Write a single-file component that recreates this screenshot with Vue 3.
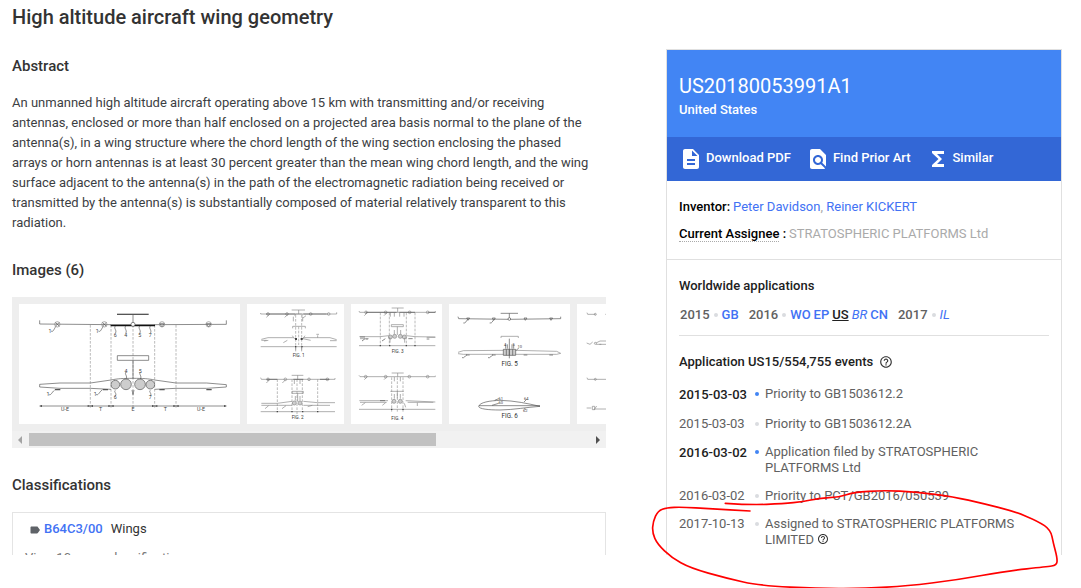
<script setup>
import { computed } from 'vue'

const icons = {
  pdf: 'M14 2H6c-1.1 0-1.99.9-1.99 2L4 20c0 1.1.89 2 1.99 2H18c1.1 0 2-.9 2-2V8l-6-6zm2 16H8v-2h8v2zm0-4H8v-2h8v2zm-3-5V3.5L18.5 9H13z',
  find: 'M20 19.59V8l-6-6H6c-1.1 0-1.99.9-1.99 2L4 20c0 1.1.89 2 1.99 2H18c.45 0 .85-.15 1.19-.4l-4.43-4.43c-.8.52-1.74.83-2.76.83-2.76 0-5-2.24-5-5s2.24-5 5-5 5 2.24 5 5c0 1.02-.31 1.96-.83 2.75L20 19.59zM9 13c0 1.66 1.34 3 3 3s3-1.34 3-3-1.34-3-3-3-3 1.34-3 3z',
  similar: 'M18 4H6v2l6.5 6L6 18v2h12v-3h-7l5-5-5-5h7z',
  label:
    'M17.63 5.84C17.27 5.33 16.67 5 16 5L5 5.01C3.9 5.01 3 5.9 3 7v10c0 1.1.9 1.99 2 1.99L16 19c.67 0 1.27-.33 1.63-.84L22 12l-4.37-6.16z',
  help: 'M11 18h2v-2h-2v2zm1-16C6.48 2 2 6.48 2 12s4.48 10 10 10 10-4.48 10-10S17.52 2 12 2zm0 18c-4.41 0-8-3.59-8-8s3.59-8 8-8 8 3.59 8 8-3.59 8-8 8zm0-14c-2.21 0-4 1.79-4 4h2c0-1.1.9-2 2-2s2 .9 2 2c0 2-3 1.75-3 5h2c0-2.25 3-2.5 3-5 0-2.21-1.79-4-4-4z'
}

const actions = [
  { icon: icons.pdf, label: 'Download PDF' },
  { icon: icons.find, label: 'Find Prior Art' },
  { icon: icons.similar, label: 'Similar' }
]

const years = [
  { year: '2015', countries: [{ code: 'GB' }] },
  {
    year: '2016',
    countries: [
      { code: 'WO' },
      { code: 'EP' },
      { code: 'US', kind: 'current' },
      { code: 'BR', kind: 'pending' },
      { code: 'CN' }
    ]
  },
  { year: '2017', countries: [{ code: 'IL', kind: 'pending' }] }
]

const events = [
  { date: '2015-03-03', text: 'Priority to GB1503612.2', key: true },
  { date: '2015-03-03', text: 'Priority to GB1503612.2A' },
  { date: '2016-03-02', text: 'Application filed by STRATOSPHERIC PLATFORMS Ltd', key: true },
  { date: '2016-03-02', text: 'Priority to PCT/GB2016/050539' },
  { date: '2017-10-13', text: 'Assigned to STRATOSPHERIC PLATFORMS LIMITED', help: true }
]

// Pen stroke, smoothed through the midpoints
const stroke = [
  [256, 400], [330, 405], [430, 401], [490, 395], [535, 385], [598, 381], [640, 367], [730, 361],
  [830, 366], [940, 380], [1030, 401], [1120, 423], [1195, 454], [1232, 480], [1240, 520], [1252, 565],
  [1250, 586], [1220, 590], [1100, 603], [950, 630], [800, 648], [680, 655], [540, 656], [360, 647],
  [260, 625], [150, 594], [95, 563], [52, 522], [37, 488], [39, 455], [54, 422], [80, 413],
  [125, 411], [210, 416], [330, 423]
]

const strokePath = computed(() => {
  let d = `M${stroke[0]}`
  for (let i = 1; i < stroke.length - 1; i++) {
    const [x, y] = stroke[i]
    const [nx, ny] = stroke[i + 1]
    d += ` Q${x} ${y} ${(x + nx) / 2} ${(y + ny) / 2}`
  }
  return `${d} L${stroke[stroke.length - 1]}`
})
</script>

<template>
  <div class="screen">
    <main class="page">
      <h1>High altitude aircraft wing geometry</h1>

      <div class="columns">
        <div class="content">
          <section>
            <h2>Abstract</h2>
            <p class="abstract">
              An unmanned high altitude aircraft operating above 15 km with transmitting and/or receiving antennas,
              enclosed or more than half enclosed on a projected area basis normal to the plane of the antenna(s), in a
              wing structure where the chord length of the wing section enclosing the phased arrays or horn antennas is
              at least 30 percent greater than the mean wing chord length, and the wing surface adjacent to the
              antenna(s) in the path of the electromagnetic radiation being received or transmitted by the antenna(s) is
              substantially composed of material relatively transparent to this radiation.
            </p>
          </section>

          <section>
            <h2>Images (6)</h2>
            <div class="carousel">
              <div class="thumbs">
                <svg class="thumb" width="221" height="120" viewBox="57 42 663 360">
                  <defs>
                    <pattern id="hatch" width="6" height="6" patternUnits="userSpaceOnUse">
                      <path d="M0 0L6 6M6 0L0 6" stroke="#666" stroke-width="1" />
                    </pattern>
                  </defs>
                  <g class="dash">
                    <path d="M271 105V356M333 105V356M399 105V356M464 105V356M528 105V356" />
                  </g>
                  <g class="line">
                    <path d="M119 91V102L333 104M464 104L679 103V91M399 73V100" />
                    <path d="M351 73H446" stroke-width="4" />
                    <path d="M332 106H465" stroke="#111" stroke-width="5" />
                    <path d="M352 197H446V211H352ZM399 211V265M396 300L399 314L402 300" />
                    <path d="M333 270L271 279H180L119 283V291L180 295H271L333 298" />
                    <path d="M464 270L528 279H620L679 284V291L620 295H528L464 298" />
                    <path d="M333 270C352 266 370 265 399 265S446 266 464 270" />
                    <path d="M165 299H181M308 299H324M478 299H494M619 299H635" stroke-width="4" />
                    <path d="M153 123C160 128 162 116 168 109M295 123C302 128 304 116 310 109" />
                    <path d="M146 313C153 318 155 307 164 300M288 313C295 318 297 307 306 300" />
                    <path d="M346 108C340 116 352 120 346 130M377 108C371 116 383 120 377 130M419 108C413 116 425 120 419 130M451 108C445 116 457 120 451 130" />
                    <path d="M378 246C372 252 384 258 378 267M421 246C415 252 427 258 421 267M346 301C340 306 352 310 346 318M451 301C445 306 457 310 451 318" />
                    <path d="M119 348H679" />
                    <path d="M166 97L178 109M178 97L166 109M307 97L319 109M319 97L307 109M479 101L493 101L486 111ZM619 101L633 101L626 111Z" />
                    <circle cx="399" cy="103" r="6" fill="#fff" />
                  </g>
                  <g class="line pale">
                    <circle cx="172" cy="103" r="8" />
                    <circle cx="313" cy="103" r="8" />
                    <circle cx="486" cy="103" r="8" />
                    <circle cx="626" cy="103" r="8" />
                  </g>
                  <path class="solid" d="M118 348l8-3v6zM271 348l-8-3v6zM271 348l8-3v6zM333 348l-8-3v6zM333 348l8-3v6zM464 348l-8-3v6zM464 348l8-3v6zM528 348l-8-3v6zM528 348l8-3v6zM680 348l-8-3v6z" />
                  <g class="round">
                    <circle cx="346" cy="284" r="13" />
                    <circle cx="378" cy="283" r="16" />
                    <circle cx="420" cy="283" r="16" />
                    <circle cx="451" cy="284" r="13" />
                  </g>
                  <g class="mark">
                    <text x="150" y="128">1</text>
                    <text x="292" y="128">1</text>
                    <text x="144" y="317">1</text>
                    <text x="286" y="317">1</text>
                    <text x="346" y="140">6</text>
                    <text x="377" y="140">4</text>
                    <text x="419" y="140">5</text>
                    <text x="451" y="140">7</text>
                    <text x="378" y="248">4</text>
                    <text x="421" y="248">5</text>
                    <text x="346" y="328">6</text>
                    <text x="451" y="328">7</text>
                    <text x="195" y="363">U-E</text>
                    <text x="302" y="363">T</text>
                    <text x="399" y="363">E</text>
                    <text x="496" y="363">T</text>
                    <text x="603" y="363">U-E</text>
                  </g>
                </svg>

                <svg class="thumb" width="97" height="120" viewBox="21 42 291 360">
                  <g class="dash">
                    <path d="M167 75V180M176 110V165M185 75V180M112 268V365M156 268V365M171 268V375M187 268V365M233 268V365" />
                  </g>
                  <g class="line pale">
                    <path d="M62 69V72H290V67M155 60H195M176 60V72M163 76L168 72H184L189 76" />
                    <path d="M158 115V109H196V115M64 148L84 143H160M190 143H270L290 149M64 151H80M270 152H290" />
                    <path d="M157 137L164 147M195 137L188 147M184 145L212 151M233 136V143M229 133H237" />
                    <path d="M79 82L89 73M134 82L144 73M189 84L198 77M72 153L85 151M130 158L142 151M62 170H290" />
                    <path d="M160 80V94M188 80V94M167 170V184M185 170V184" />
                    <circle cx="84" cy="72" r="4" />
                    <circle cx="141" cy="72" r="4" />
                    <circle cx="212" cy="72" r="4" />
                    <circle cx="266" cy="72" r="4" />
                    <path d="M62 263L64 268H285V264M155 256H190M173 256V268M156 304H190V310H156ZM173 310V334" />
                    <path d="M64 340H112L156 334M190 334L233 338H285M64 346H115L156 346M190 346H270M62 365H285" />
                    <path d="M79 279L89 269M127 279L137 269M163 270V282M180 270V282M166 318V332M180 318V332M75 356L86 347M126 356L138 347M203 350L217 346" />
                    <circle cx="84" cy="268" r="4" />
                    <circle cx="136" cy="268" r="4" />
                    <circle cx="207" cy="268" r="4" />
                    <circle cx="262" cy="268" r="4" />
                  </g>
                  <path class="line" d="M78 72H166M190 72H260M160 268H190M80 268H112M240 268H268" />
                  <g class="round pale">
                    <circle cx="163" cy="339" r="6" />
                    <circle cx="180" cy="339" r="6" />
                  </g>
                  <path class="solid" d="M165 144h6v6h-6zM182 144h6v6h-6zM165 168h4v4h-4zM184 168h4v4h-4zM110 363h4v4h-4zM154 363h4v4h-4zM186 363h4v4h-4zM231 363h4v4h-4z" />
                  <g class="fig">
                    <text x="176" y="202">FIG. 1</text>
                    <text x="173" y="387">FIG. 2</text>
                  </g>
                </svg>

                <svg class="thumb" width="91" height="120" viewBox="333 42 273 360">
                  <g class="dash">
                    <path d="M421 68V166M448 68V166M499 68V166M525 68V166M455 262V365M472 262V365M489 262V365" />
                  </g>
                  <g class="line pale">
                    <path d="M357 63L359 67H586V63M455 54H491M473 54V67M454 104H490V110H454ZM472 110V135" />
                    <path d="M358 140H420L446 137M499 137L525 140L586 141M360 146H386M560 142H586M357 167H586" />
                    <path d="M373 77L382 68M432 77L441 68M451 68V80M463 68V80M479 68V80M492 68V80M463 120V133M482 120V133M450 144V158M494 144V158" />
                    <path d="M366 153L375 146M426 153L436 146M505 146H518M377 147H384M560 147H568" stroke-width="3" />
                    <circle cx="378" cy="67" r="4" />
                    <circle cx="437" cy="67" r="4" />
                    <circle cx="509" cy="67" r="4" />
                    <circle cx="563" cy="67" r="4" />
                    <path d="M357 256L360 260H586V257M455 249H491M473 249V260M451 304H491M472 304V325" />
                    <path d="M358 332H444M497 332L586 336M360 337H440M503 337H580M357 358H586" />
                    <path d="M373 269L382 260M432 269L441 260M463 261V274M481 261V274M365 346L376 338M427 346L437 338M532 338V348M493 340L497 352M463 312V326M481 312V326" />
                    <circle cx="377" cy="260" r="4" />
                    <circle cx="437" cy="260" r="4" />
                    <circle cx="508" cy="260" r="4" />
                    <circle cx="563" cy="260" r="4" />
                  </g>
                  <path class="line" d="M378 67H470M478 67H525M360 141H375M565 67H586M420 332H435" />
                  <g class="round pale">
                    <circle cx="451" cy="141" r="6" />
                    <circle cx="464" cy="139" r="6" />
                    <circle cx="481" cy="139" r="6" />
                    <circle cx="493" cy="141" r="6" />
                    <circle cx="462" cy="334" r="6" />
                    <circle cx="481" cy="334" r="6" />
                  </g>
                  <path class="solid" d="M419 165h4v4h-4zM447 165h4v4h-4zM497 165h4v4h-4zM523 165h4v4h-4zM453 356h4v4h-4zM487 356h4v4h-4z" />
                  <g class="fig">
                    <text x="473" y="188">FIG. 3</text>
                    <text x="472" y="389">FIG. 4</text>
                  </g>
                </svg>

                <svg class="thumb" width="121" height="120" viewBox="27 42 363 360">
                  <g class="line">
                    <path d="M54 80L56 86L208 88L362 86V80M182 70H234M208 70V84M208 146V205" />
                    <path d="M183 144V139H235V144" class="pale" />
                    <path d="M54 187L70 182L190 181M227 181L350 184L362 190L350 193L227 193M190 193H70L54 191" class="pale" />
                    <path d="M70 99C78 101 78 92 84 88M149 99C157 101 157 92 163 88M66 203C74 205 74 198 81 194M144 203C152 205 152 198 159 194" />
                    <path d="M78 195H89M156 195H167M251 195H262M328 195H339" />
                    <path d="M197 163V176M202 163V176M216 163V176M221 163V176M228 182L236 174" />
                    <path d="M80 84H89L84 91ZM157 84H166L161 91ZM252 84H261L256 91ZM329 84H338L333 91Z" />
                    <circle cx="208" cy="87" r="4" fill="#fff" />
                    <path d="M116 349C119 337 150 332 180 331C225 332 265 341 300 349C258 352 225 359 180 360C145 360 117 357 116 349ZM117 347H300" />
                    <path d="M164 331L176 326M156 346L176 340M260 328L252 336M254 354L256 360" />
                  </g>
                  <g class="round">
                    <path d="M190 178H227V196H190Z" />
                    <path d="M199 178V196M208 178V196M218 178V196" />
                  </g>
                  <g class="mark small">
                    <text x="195" y="168">4</text>
                    <text x="221" y="168">5</text>
                    <text x="239" y="175">10</text>
                    <text x="182" y="329">61</text>
                    <text x="182" y="343">60</text>
                    <text x="259" y="329">64</text>
                    <text x="256" y="366">62</text>
                  </g>
                  <g class="fig large">
                    <text x="209" y="227">FIG. 5</text>
                    <text x="209" y="384">FIG. 6</text>
                  </g>
                </svg>

                <svg class="thumb" width="97" height="120" viewBox="411 42 291 360">
                  <g class="line pale">
                    <path d="M441 68L443 73H467M496 73H520M440 159L450 163L458 156M468 159L480 153H500M468 163H500M441 263L443 268H500" />
                    <path d="M440 354H454M457 349H464V359H457ZM470 348L462 360M464 357H500M478 163H484" />
                    <circle cx="466" cy="73" r="3" />
                    <circle cx="466" cy="268" r="3" />
                    <circle cx="466" cy="160" r="3" />
                  </g>
                </svg>
              </div>
              <div class="scrollbar">
                <button type="button" class="arrow" aria-label="Scroll left" disabled>
                  <svg width="17" height="17" viewBox="0 0 17 17"><path d="M10 5v8L6 9z" /></svg>
                </button>
                <div class="track"><div class="handle"></div></div>
                <button type="button" class="arrow" aria-label="Scroll right">
                  <svg width="17" height="17" viewBox="0 0 17 17"><path d="M7 5v8l4-4z" /></svg>
                </button>
              </div>
            </div>
          </section>

          <section>
            <h2>Classifications</h2>
            <div class="classes">
              <div class="class-row">
                <svg width="12" height="12" viewBox="0 0 24 24"><path :d="icons.label" /></svg>
                <a href="#">B64C3/00</a>
                <span>Wings</span>
              </div>
              <a class="more" href="#">View 10 more classifications</a>
            </div>
          </section>
        </div>

        <aside class="card">
          <header class="card-head">
            <h2>US20180053991A1</h2>
            <p>United States</p>
          </header>
          <nav class="actions">
            <a v-for="a in actions" :key="a.label" href="#">
              <svg width="24" height="24" viewBox="0 0 24 24"><path :d="a.icon" /></svg>
              <span>{{ a.label }}</span>
            </a>
          </nav>

          <dl class="people">
            <div>
              <dt>Inventor:</dt>
              <dd><a href="#">Peter Davidson</a>, <a href="#">Reiner KICKERT</a></dd>
            </div>
            <div>
              <dt><span class="term">Current Assignee</span> :</dt>
              <dd>STRATOSPHERIC PLATFORMS Ltd</dd>
            </div>
          </dl>

          <div class="history">
            <h3>Worldwide applications</h3>
            <div class="years">
              <div v-for="y in years" :key="y.year" class="year">
                <span>{{ y.year }}</span>
                <i class="dot"></i>
                <div class="countries">
                  <a v-for="c in y.countries" :key="c.code" href="#" :class="c.kind">{{ c.code }}</a>
                </div>
              </div>
            </div>

            <h3 class="events-title">
              Application US15/554,755 events
              <svg width="14" height="14" viewBox="0 0 24 24"><path :d="icons.help" /></svg>
            </h3>
            <ul class="events">
              <li v-for="e in events" :key="e.text" :class="{ key: e.key }">
                <time>{{ e.date }}</time>
                <i class="dot"></i>
                <span>
                  {{ e.text }}
                  <svg v-if="e.help" width="12" height="12" viewBox="0 0 24 24"><path :d="icons.help" /></svg>
                </span>
              </li>
            </ul>
          </div>
        </aside>
      </div>
    </main>

    <svg class="annotation" width="441" height="218" viewBox="0 0 1323 654">
      <path :d="strokePath" />
    </svg>
  </div>
</template>

<style>
body {
  margin: 0;
  background: #fff;
}
</style>

<style scoped>
.screen {
  position: relative;
  height: 100vh;
  overflow: hidden;
  font-family: Roboto, 'Liberation Sans', sans-serif;
  font-size: 13px;
  color: #3c4043;
}

.page {
  height: calc(100vh - 33px);
  overflow: hidden;
  padding: 0 19px 0 12px;
  box-sizing: border-box;
}

h1,
h2,
h3,
p,
dl,
dd,
ul {
  margin: 0;
  padding: 0;
}

a {
  color: #4272f4;
  text-decoration: none;
}

h1 {
  padding: 5px 0 20px;
  font-size: 20px;
  line-height: 24px;
  font-weight: 500;
  color: #333;
}

.columns {
  display: grid;
  grid-template-columns: minmax(0, 3fr) minmax(0, 2fr);
  gap: 60px;
}

.content {
  display: flex;
  flex-direction: column;
  gap: 27px;
  padding-top: 7px;
}

.content h2 {
  margin-bottom: 17px;
  font-size: 15px;
  line-height: 20px;
  font-weight: 500;
  color: #333;
}

.abstract {
  padding-right: 16px;
  line-height: 20px;
}

/* Images */
.carousel {
  background: #eee;
}

.thumbs {
  display: flex;
  gap: 7px;
  padding: 7px;
  overflow: hidden;
}

.thumb {
  flex: none;
  background: #fff;
}

.line,
.dash,
.round {
  fill: none;
  stroke: #555;
  stroke-width: 2;
}

.dash {
  stroke: #999;
  stroke-dasharray: 8 4;
}

.round {
  fill: url(#hatch);
}

.pale {
  stroke: #888;
}

.solid {
  fill: #444;
}

.mark {
  fill: #444;
  font-size: 16px;
  text-anchor: middle;
}

.mark.small {
  font-size: 12px;
}

.fig {
  fill: #333;
  font-size: 14px;
  text-anchor: middle;
}

.fig.large {
  font-size: 19px;
}

.scrollbar {
  display: flex;
  height: 17px;
  background: #f1f1f1;
}

.arrow {
  width: 17px;
  height: 17px;
  padding: 0;
  border: none;
  background: none;
  fill: #505050;
}

.arrow:disabled {
  fill: #a3a3a3;
}

.arrow svg {
  display: block;
}

.track {
  flex: 1;
  padding: 2px 0;
}

.handle {
  width: 72.7%;
  height: 13px;
  background: #c1c1c1;
}

/* Classifications */
.classes {
  border: 1px solid #e4e4e4;
  padding: 6px 12px;
}

.class-row {
  display: flex;
  align-items: center;
  gap: 8px;
  padding-left: 4px;
  line-height: 20px;
  color: #333;
}

.class-row svg {
  margin: 2px -5px 0 0;
  fill: #5f6368;
}

.class-row a {
  font-weight: 500;
}

.more {
  display: block;
  padding-top: 9px;
  line-height: 20px;
  color: #777;
}

/* Summary card */
.card {
  border: 1px solid #e0e0e0;
  padding-bottom: 40px;
}

.card-head {
  height: 87px;
  padding: 24px 12px 0;
  box-sizing: border-box;
  background: #4285f4;
  color: #fff;
}

.card-head h2 {
  font-size: 20px;
  line-height: 24px;
  font-weight: 400;
}

.card-head p {
  line-height: 24px;
  font-weight: 500;
}

.actions {
  display: flex;
  gap: 15px;
  height: 44px;
  padding: 0 12px;
  background: #3367d6;
}

.actions a {
  display: flex;
  align-items: center;
  gap: 3px;
  color: #fff;
  font-weight: 500;
}

.actions svg {
  fill: #fff;
}

.actions span {
  padding-bottom: 4px;
}

.people {
  padding: 12px;
  border-bottom: 1px solid #e0e0e0;
  line-height: 27px;
}

.people dt,
.people dd {
  display: inline;
}

.people dt {
  margin-right: 3px;
  color: #000;
  font-weight: 500;
}

.people dd {
  color: #aaa;
}

.term {
  border-bottom: 1px dotted #aaa;
}

.history {
  padding: 16px 12px 0;
}

h3 {
  font-size: 13px;
  line-height: 20px;
  font-weight: 500;
  color: #212121;
}

.years {
  display: flex;
  gap: 10px;
  padding: 9px 1px 10px;
  border-bottom: 1px solid #e0e0e0;
  line-height: 20px;
}

.year {
  display: flex;
  align-items: center;
  gap: 4px;
  color: #616161;
  font-weight: 500;
}

.countries {
  display: flex;
  gap: 3px;
}

.dot {
  width: 4px;
  height: 4px;
  border-radius: 50%;
  background: #dadce0;
}

.year .current {
  color: #212121;
  text-decoration: underline;
}

.year .pending {
  font-style: italic;
  font-weight: 400;
}

.events-title {
  display: flex;
  align-items: center;
  gap: 6px;
  padding-top: 16px;
}

.events {
  display: grid;
  gap: 12px;
  padding-top: 14px;
  list-style: none;
}

.events li {
  display: grid;
  grid-template-columns: 76px 10px 1fr;
  padding-right: 12px;
  line-height: 16px;
  color: #616161;
}

.events .dot {
  margin-top: 6px;
}

.events .key time {
  line-height: 18px;
  font-weight: 500;
  color: #212121;
}

.events .key .dot {
  background: #4285f4;
}

.events-title svg,
.events svg {
  fill: #333;
}

.events svg {
  vertical-align: -1px;
}

.annotation {
  position: absolute;
  top: 370px;
  right: 0;
  pointer-events: none;
}

.annotation path {
  fill: none;
  stroke: #f00;
  stroke-width: 5;
  stroke-linecap: round;
}
</style>
